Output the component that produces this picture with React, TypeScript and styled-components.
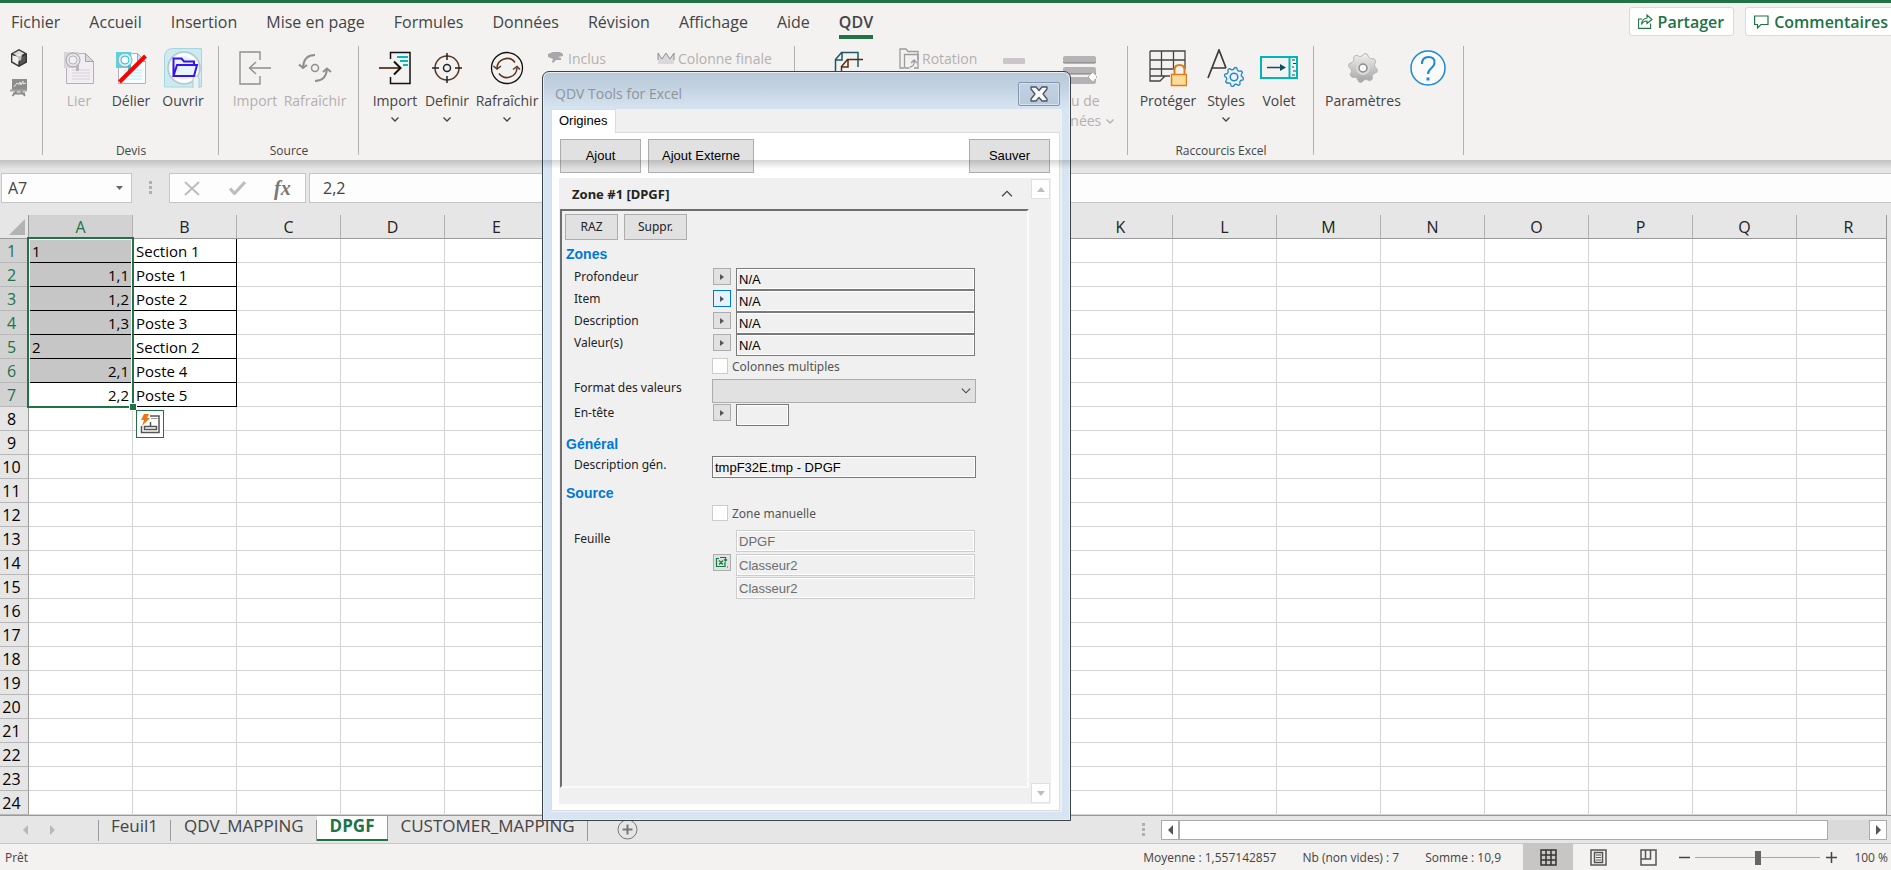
import React from "react";
import styled, { createGlobalStyle, css } from "styled-components";

const ui = `"Open Sans", "Noto Sans", sans-serif`;
const dlg = `"Noto Sans", "Open Sans", sans-serif`;
const arial = `"Liberation Sans", Arial, sans-serif`;
const green = "#217346";

const GlobalStyle = createGlobalStyle`
  *, *::before, *::after { box-sizing: border-box; }
  body { margin: 0; background: #e6e6e6; font-family: ${ui}; color: #444; overflow-x: hidden; }
  button, input, select { font: inherit; color: inherit; margin: 0; padding: 0; }
  button { cursor: default; white-space: nowrap; }
  svg { display: block; flex: none; }
`;

/* ---------- Application frame ---------- */
const Window = styled.div`
  position: relative;
  display: flex;
  flex-direction: column;
  overflow: hidden;
`;
const Ribbon = styled.header`
  position: relative;
  border-top: 3px solid ${green};
  background: #f3f2f1;
`;
const RibbonShadow = styled.div`
  position: absolute;
  z-index: 5;
  top: 100%;
  left: 0;
  right: 0;
  height: 9px;
  pointer-events: none;
  background: linear-gradient(rgba(0, 0, 0, 0.16), rgba(0, 0, 0, 0));
`;
const TopRow = styled.div`
  display: flex;
  justify-content: space-between;
  height: 36px;
  padding-top: 3px;
`;
const Tabs = styled.nav`
  display: flex;
  gap: 29px;
  padding-left: 11px;
`;
const Tab = styled.button<{ $active?: boolean }>`
  height: 33px;
  border: 0;
  border-bottom: 4px solid ${(p) => (p.$active ? green : "transparent")};
  background: none;
  font-size: 16px;
  line-height: 24px;
  padding-top: 2px;
  font-weight: ${(p) => (p.$active ? 600 : 400)};
`;
const TopActions = styled.div`
  display: flex;
  gap: 11px;
  padding-top: 1px;
`;
const ActionButton = styled.button<{ $edge?: boolean }>`
  display: flex;
  align-items: center;
  gap: 5px;
  height: 29px;
  padding: 0 ${(p) => (p.$edge ? 3 : 9)}px 0 8px;
  border: 1px solid #dcdad8;
  border-radius: 3px;
  background: #fff;
  color: ${green};
  font-size: 16px;
  font-weight: 600;
  ${(p) => p.$edge && css`border-right: 0; border-radius: 3px 0 0 3px;`}
`;
const ToolRow = styled.div`
  display: flex;
  height: 121px;
  padding-top: 7px;
`;
const Divider = styled.i`
  flex: none;
  width: 1px;
  height: 109px;
  background: #b3b0ad;
`;
const Group = styled.section`
  display: flex;
  flex: none;
  flex-direction: column;
  padding: 2px 9px 0 10px;
`;
const Tools = styled.div`
  display: flex;
  height: 94px;
`;
const GroupLabel = styled.div`
  font-size: 12px;
  line-height: 18px;
  text-align: center;
`;
const QuickColumn = styled.div`
  display: flex;
  flex: none;
  flex-direction: column;
  gap: 11px;
  width: 42px;
  padding: 3px 0 0 10px;
`;
const IconButton = styled.button`
  width: 18px;
  height: 18px;
  border: 0;
  background: none;
`;
const BigButton = styled.button<{ $w: number }>`
  display: flex;
  flex-direction: column;
  align-items: center;
  width: ${(p) => p.$w}px;
  border: 0;
  background: none;
  font-size: 14px;
  line-height: 20px;
  &:disabled { color: #b3b0ad; }
`;
const IconBox = styled.span`
  display: flex;
  align-items: center;
  justify-content: center;
  height: 40px;
  margin-bottom: 3px;
`;
const ChevronLine = styled.span`
  display: flex;
  align-items: center;
  justify-content: center;
  gap: 5px;
  min-height: 16px;
`;
const SmallColumn = styled.div<{ $w: number }>`
  width: ${(p) => p.$w}px;
  padding-left: 6px;
`;
const SmallButton = styled.button`
  display: flex;
  align-items: center;
  gap: 3px;
  height: 20px;
  border: 0;
  background: none;
  font-size: 14px;
  &:disabled { color: #b3b0ad; }
`;

/* ---------- Formula bar ---------- */
const FormulaBar = styled.div`
  display: flex;
  height: 55px;
  padding: 13px 0 0 1px;
  font-size: 16px;
`;
const BarBox = styled.div`
  display: flex;
  align-items: center;
  height: 30px;
  border: 1px solid #c6c6c6;
  background: #fdfdfd;
`;
const NameBox = styled(BarBox)`
  width: 131px;
  padding: 0 8px 0 6px;
`;
const BarInput = styled.input`
  flex: 1;
  min-width: 0;
  border: 0;
  background: none;
  outline: 0;
`;
const Grip = styled.i`
  width: 3px;
  height: 14px;
  margin: 8px 17px 0;
  background: repeating-linear-gradient(#b0b0b0 0 3px, transparent 3px 5px);
`;
const FxBox = styled(BarBox)`
  width: 137px;
  margin-right: 3px;
  justify-content: space-around;
`;
const FxButton = styled.button`
  border: 0;
  background: none;
  color: #777;
  font: italic bold 20px/24px "Liberation Serif", serif;
`;
const FormulaBox = styled(BarBox)`
  flex: 1;
  padding-left: 13px;
  border-right: 0;
`;

/* ---------- Sheet ---------- */
const SheetArea = styled.main`
  position: relative;
  height: 600px;
  margin-right: 4px;
  overflow: hidden;
  border-right: 1px solid #999;
  background: #fff;
`;
const Grid = styled.table`
  table-layout: fixed;
  width: 1901px;
  border-spacing: 0;
  font-size: 15px;
  line-height: 20px;
  color: #000;
  th, td { height: 24px; padding: 1px 3px 0; font-weight: 400; white-space: nowrap; }
`;
const Corner = styled.th`
  position: relative;
  width: 29px;
  background: #e6e6e6;
  border-right: 1px solid #999;
  border-bottom: 1px solid #999;
  &::after {
    content: "";
    position: absolute;
    right: 3px;
    bottom: 3px;
    border-left: 16px solid transparent;
    border-bottom: 16px solid #b3b3b3;
  }
`;
const ColHead = styled.th<{ $on?: boolean }>`
  width: 104px;
  font-size: 16px;
  text-align: center;
  border-right: 1px solid #b1b1b1;
  border-bottom: 1px solid #999;
  background: ${(p) => (p.$on ? "#d2d2d2" : "#e6e6e6")};
  color: ${(p) => (p.$on ? green : "#222")};
`;
const RowHead = styled.th<{ $on?: boolean }>`
  font-size: 16px;
  text-align: center;
  border-right: 1px solid #999;
  border-bottom: 1px solid #b8b8b8;
  background: ${(p) => (p.$on ? "#d2d2d2" : "#e6e6e6")};
  color: ${(p) => (p.$on ? green : "#000")};
  && { padding: 1px 5px 0 0; }
`;
const Cell = styled.td<{ $boxed?: boolean; $shaded?: boolean; $num?: boolean }>`
  border-right: 1px solid ${(p) => (p.$boxed ? "#000" : "#d4d4d4")};
  border-bottom: 1px solid ${(p) => (p.$boxed ? "#000" : "#d4d4d4")};
  background: ${(p) => (p.$shaded ? "#c6c6c6" : "#fff")};
  text-align: ${(p) => (p.$num ? "right" : "left")};
`;
const Selection = styled.div`
  position: absolute;
  top: 22px;
  left: 27px;
  width: 107px;
  height: 171px;
  border: 2px solid ${green};
  box-shadow: inset 0 0 0 1px #fff;
  pointer-events: none;
  &::after {
    content: "";
    position: absolute;
    right: -4px;
    bottom: -4px;
    width: 6px;
    height: 6px;
    background: ${green};
    outline: 1px solid #fff;
  }
`;
const QuickAnalysis = styled.button`
  position: absolute;
  top: 195px;
  left: 136px;
  display: grid;
  place-items: center;
  width: 28px;
  height: 28px;
  border: 1px solid ${green};
  background: #fff;
`;

/* ---------- Sheet tabs and status bar ---------- */
const SheetBar = styled.div`
  display: flex;
  height: 29px;
  border-top: 1px solid #999;
  border-bottom: 1px solid #c6c6c6;
`;
const TabArrows = styled.div`
  display: flex;
  align-items: center;
  gap: 22px;
  width: 98px;
  padding-left: 23px;
`;
const SheetTab = styled.button<{ $active?: boolean; $first?: boolean }>`
  position: relative;
  height: 25px;
  padding: 0 13px 6px;
  border: 0;
  background: none;
  font-size: 17px;
  line-height: 19px;
  &::after, &::before {
    content: "";
    position: absolute;
    top: 4px;
    right: 0;
    width: 1px;
    height: 21px;
    background: #999;
  }
  &::before { right: auto; left: 0; display: ${(p) => (p.$first ? "block" : "none")}; }
  ${(p) =>
    p.$active &&
    css`
      background: #fff;
      color: ${green};
      font-weight: 700;
      padding-bottom: 4px;
      border-bottom: 2px solid ${green};
      &::after { top: 0; height: 23px; }
    `}
`;
const AddSheet = styled.button`
  display: grid;
  place-items: center;
  width: 24px;
  margin-left: 28px;
  border: 0;
  background: none;
`;
const SheetScroll = styled.div`
  display: flex;
  width: 726px;
  height: 20px;
  margin: 4px 4px 0 0;
  background: #dadada;
`;
const BarGrip = styled(Grip)`
  margin: 7px 16px 0 auto;
`;
const ScrollStep = styled.button`
  display: grid;
  place-items: center;
  width: 18px;
  border: 1px solid #ababab;
  background: #fff;
`;
const ScrollThumb = styled.div`
  flex: 1;
  margin-right: 41px;
  border: 1px solid #ababab;
  background: #fff;
`;
const StatusBar = styled.footer`
  display: flex;
  align-items: center;
  height: 27px;
  padding: 0 3px 0 5px;
  background: #f3f2f1;
  font-size: 12px;
  white-space: nowrap;
`;
const Stats = styled.div`
  display: flex;
  gap: 26px;
  margin: 0 22px 0 auto;
`;
const ViewButton = styled.button<{ $on?: boolean }>`
  display: grid;
  place-items: center;
  width: 50px;
  height: 27px;
  border: 0;
  background: ${(p) => (p.$on ? "#c8c6c4" : "none")};
`;
const ZoomButton = styled.button`
  display: grid;
  place-items: center;
  width: 12px;
  height: 20px;
  margin: 0 5px;
  border: 0;
  background: none;
`;
const ZoomRange = styled.input`
  appearance: none;
  width: 125px;
  height: 14px;
  background: linear-gradient(#a6a6a6, #a6a6a6) center / 100% 1px no-repeat;
  &::-webkit-slider-thumb {
    appearance: none;
    width: 6px;
    height: 14px;
    background: #666;
  }
`;
const ZoomValue = styled.span`
  margin-left: 9px;
  width: 37px;
  text-align: right;
`;

/* ---------- Dialog ---------- */
const Dialog = styled.section`
  position: absolute;
  z-index: 3;
  top: 71px;
  left: 542px;
  width: 529px;
  height: 750px;
  display: flex;
  flex-direction: column;
  padding: 0 8px 8px;
  border: 1px solid #3c4248;
  border-radius: 7px 7px 0 0;
  background: linear-gradient(#b9c8d6, #c5d4e3 18px, #d7e4f2 37px);
  box-shadow: inset 0 0 0 1px #e6eef7;
`;
const TitleBar = styled.div`
  display: flex;
  justify-content: space-between;
  height: 37px;
  padding: 10px 2px 0 4px;
  font-size: 14px;
  line-height: 24px;
  color: #8e9499;
`;
const CloseButton = styled.button`
  display: grid;
  place-items: center;
  width: 42px;
  height: 24px;
  border: 1px solid #8296b0;
  border-radius: 2px;
  background: linear-gradient(#c3d2e2, #b9cadc);
  box-shadow: inset 0 0 0 1px #d5e1ee;
`;
const Client = styled.div`
  display: flex;
  flex: 1;
  flex-direction: column;
  padding: 0 2px 1px 0;
  background: #f0f0f0;
`;
const DialogTab = styled.button`
  align-self: flex-start;
  position: relative;
  z-index: 1;
  height: 24px;
  margin-bottom: -1px;
  padding: 0 8px 1px 7px;
  border: 1px solid #dcdcdc;
  border-bottom: 0;
  background: #fff;
  color: #000;
  font: 13px/20px ${arial};
`;
const Page = styled.div`
  display: flex;
  flex: 1;
  flex-direction: column;
  gap: 5px;
  padding: 6px 8px 6px 7px;
  border: 1px solid #dcdcdc;
  background: #fff;
`;
const PageActions = styled.div`
  display: flex;
  gap: 7px;
  padding: 0 1px;
`;
const Spacer = styled.span`
  flex: 1;
`;
const PushButton = styled.button<{ $w: number; $small?: boolean }>`
  width: ${(p) => p.$w}px;
  height: ${(p) => (p.$small ? 26 : 34)}px;
  border: 1px solid #adadad;
  background: #e1e1e1;
  color: ${(p) => (p.$small ? "#222" : "#000")};
  font: ${(p) => (p.$small ? `12px/18px ${dlg}` : `13px/20px ${arial}`)};
`;
const Panel = styled.div`
  display: flex;
  flex: 1;
  background: #f0f0f0;
`;
const PanelMain = styled.div`
  display: flex;
  flex: 1;
  flex-direction: column;
  padding: 0 2px 16px 1px;
`;
const ZoneHeader = styled.button`
  display: flex;
  align-items: center;
  justify-content: space-between;
  height: 31px;
  padding: 0 16px 0 12px;
  border: 0;
  background: none;
  color: #222;
  font: bold 13px/20px ${dlg};
`;
const Sunken = styled.div`
  flex: 1;
  padding: 3px;
  border: 2px solid;
  border-color: #6e6e6e #fafafa #fafafa #6e6e6e;
  font: 12px/17px ${dlg};
  color: #222;
`;
const PanelScroll = styled.div`
  display: flex;
  flex-direction: column;
  justify-content: space-between;
  padding: 1px 1px 1px 0;
`;
const PanelStep = styled.button`
  display: grid;
  place-items: center;
  width: 19px;
  height: 20px;
  border: 1px solid #e0e0e0;
  background: #fff;
`;
const ZoneActions = styled.div`
  display: flex;
  gap: 6px;
`;
const Heading = styled.h3<{ $top: number }>`
  margin: ${(p) => p.$top}px 0 0;
  padding-left: 1px;
  color: #0078d7;
  font: bold 14px/20px ${arial};
`;
const FormRow = styled.div<{ $top?: number; $wide?: boolean }>`
  display: grid;
  grid-template-columns: ${(p) => (p.$wide ? "147px 264px" : "148px 23px 239px")};
  align-items: start;
  margin-top: ${(p) => p.$top || 0}px;
  & > label, & > span { padding-left: 9px; }
`;
const Pick = styled.button<{ $hot?: boolean }>`
  display: grid;
  place-items: center;
  width: 18px;
  height: 17px;
  border: 1px solid ${(p) => (p.$hot ? "#0078d7" : "#adadad")};
  background: ${(p) => (p.$hot ? "#e5f1fb" : "#e1e1e1")};
`;
const Field = styled.input<{ $w?: number }>`
  grid-column: -2;
  width: ${(p) => (p.$w ? `${p.$w}px` : "100%")};
  height: 22px;
  padding: 0 2px;
  border: 1px solid #7a7a7a;
  background: #f0f0f0;
  box-shadow: inset 0 0 0 1px #fff;
  color: #000;
  font: 13px/18px ${arial};
  &:disabled { border-color: #ccc; color: #6d6d6d; }
`;
const SelectWrap = styled.div`
  position: relative;
  & > svg { position: absolute; right: 5px; top: 9px; pointer-events: none; }
`;
const Select = styled.select`
  appearance: none;
  display: block;
  width: 100%;
  height: 24px;
  border: 1px solid #adadad;
  background: #e1e1e1;
`;
const CheckRow = styled.label`
  display: flex;
  align-items: center;
  gap: 4px;
  height: 20px;
  padding-left: 147px;
  color: #555;
`;
const Check = styled.input`
  appearance: none;
  width: 16px;
  height: 16px;
  border: 1px solid #ccc;
  background: #fff;
`;

/* ---------- Icons ---------- */
const Chevron = ({ color = "#444", up = false, s = 8 }: { color?: string; up?: boolean; s?: number }) => (
  <svg width={s} height={s / 2 + 1} viewBox="0 0 8 5" fill="none" stroke={color} strokeWidth={s > 8 ? 0.9 : 1.3}>
    <path d={up ? "M.5 4.5 4 1l3.5 3.5" : "M.5.5 4 4 7.5.5"} />
  </svg>
);
const Triangle = ({ d, w, h, color }: { d: string; w: number; h: number; color: string }) => (
  <svg width={w} height={h} viewBox={`0 0 ${w} ${h}`}><path d={d} fill={color} /></svg>
);
const CubeIcon = () => (
  <svg width="18" height="18" viewBox="0 0 18 18">
    <path d="M9 0 17 4.500V13.500L9 18 1 13.500V4.500z" fill="#333" />
    <path d="M9 1.500 14.500 4.600 9 7.500 3 4.800z" fill="#d8d8d8" />
    <path d="M2.300 6 8.400 8.800V16L2.300 12.600z" fill="#eee" />
    <path d="M9.800 9 15.600 6v6.500l-5.800 3.700z" fill="#555" />
    <path d="M4 7.500 9 4.500l3 1.500-1 5-4 2z" fill="#f5f5f5" opacity=".7" />
  </svg>
);
const BoardIcon = () => (
  <svg width="18" height="19" viewBox="0 0 18 19" fill="none">
    <path d="M2 1h15v11H2z" fill="#8d8d8d" />
    <path d="M4 9l3-4 2 1.500L10 4l1 3 2-4v3l3-1" stroke="#e8e8e8" />
    <path d="M0 12.500h17" stroke="#a5a5a5" strokeWidth="2" />
    <path d="M6.500 13l-4 5M11 13l4 5M3 15.500h12" stroke="#8d8d8d" strokeWidth="2" />
  </svg>
);
const SheetIcon = ({ off = false }: { off?: boolean }) => {
  const c = off ? "#b9b6ba" : "#2cc3d2";
  const page = off ? "#f1edf2" : "#f7fdfe";
  return (
    <svg width="33" height="34" viewBox="0 0 33 34" fill="none">
      <path d="M3.500 2.500h19l8 8v22h-27z" fill={page} stroke="#b4b2b6" />
      <path d="M22.500 2.500v8h8z" fill={off ? "#dcd9de" : "#b3eef3"} stroke="#a7a5a9" />
      <path d="M9 19h18M9 22h18M9 25h18M9 28h18" stroke={off ? "#d4d0d6" : "#bcecf1"} />
      <path d="M1 1h15v16H1z" fill={off ? "#d9d6da" : "#59d5e0"} />
      <circle cx="10" cy="9" r="7" fill={off ? "#e6e3e7" : "#c4f2f6"} stroke="#9fa3a6" />
      <circle cx="10" cy="9" r="4" fill={page} stroke={c} />
      <path d="M13 14h3v6h-3z" fill={c} />
      {!off && <path d="M4.500 31 30.500 5" stroke="#f00" strokeWidth="4" />}
    </svg>
  );
};
const FolderIcon = () => (
  <svg width="38" height="40" viewBox="0 0 38 40" fill="none">
    <path d="M.5 39V9Q.5.500 9 .5h28.500V39z" fill="#cdeaf0" stroke="#a3d7e0" />
    <circle cx="20" cy="20" r="16" fill="#e6f5f8" stroke="#b7c6cc" strokeWidth="1.500" />
    <circle cx="20" cy="20" r="13" stroke="#fff" strokeWidth="2" />
    <path d="M29 40V31q0-3 3-3t3 3v9" fill="#e6f5f8" stroke="#b7c6cc" />
    <path d="M9.500 28V10.500h8l2.500 3h10V17M9.500 28 13 17h20l-3 11z" stroke="#3a12f0" strokeWidth="2" />
  </svg>
);
const ExportIcon = () => (
  <svg width="34" height="34" viewBox="0 0 34 34" fill="none" stroke="#8f8f8f" strokeWidth="1.400">
    <path d="M22 9V1H2v32h20v-8M33 17H11M18 11l-6.500 6 6.500 6" />
  </svg>
);
const SyncOffIcon = () => (
  <svg width="34" height="32" viewBox="0 0 34 32" fill="none" stroke="#8f8f8f" strokeWidth="2">
    <circle cx="17" cy="16" r="3.500" strokeWidth="1.500" />
    <path d="M17 3Q6 3 5 15M17 29Q28 29 29 17" /><path d="M1 12.500l4 3.500 4-3M25 20l4-3.500 4 3.500" />
  </svg>
);
const ImportIcon = () => (
  <svg width="34" height="34" viewBox="0 0 34 34" fill="none" stroke="#111" strokeWidth="1.500">
    <path d="M12.500 8V1.500H32v31H12.500V26" />
    <path d="M1 17h21" stroke="#5a3522" strokeWidth="1.800" /><path d="M16 10.500l6.500 6.500-6.500 6.500" strokeWidth="2" />
    <path d="M19 6h11M22 10h8M25 14h5" stroke="#00bcc0" strokeWidth="2" />
  </svg>
);
const TargetIcon = () => (
  <svg width="32" height="32" viewBox="0 0 32 32" fill="none" stroke="#5a3522" strokeWidth="1.500">
    <circle cx="16" cy="16" r="12" /><circle cx="16" cy="16" r="3.500" stroke="#222" />
    <path d="M16 1v7M16 24v7M1 16h7M24 16h7" stroke="#222" />
  </svg>
);
const RefreshIcon = () => (
  <svg width="34" height="34" viewBox="0 0 34 34" fill="none">
    <circle cx="17" cy="17" r="15.500" stroke="#111" strokeWidth="1.300" />
    <g stroke="#5a3522" strokeWidth="1.500">
      <path d="M25 11.500A10 10 0 0 0 7 17M9 22.500A10 10 0 0 0 27 17" />
      <path d="M3.500 15l3.500 3 4-3M23 18.500l4-3 3 3" />
    </g>
  </svg>
);
const CapIcon = () => (
  <svg width="18" height="14" viewBox="0 0 18 14" fill="#a9a7a9">
    <path d="M1 3 6 1h7l3 2v2l-5 1 3 1v2H9l-3 3-1-1 1-3-5-2z" />
  </svg>
);
const CrownIcon = () => (
  <svg width="18" height="14" viewBox="0 0 18 14">
    <path d="M1 13V2l4 6 4-6 4 6 4-6v11z" fill="#dcd7dd" />
    <path d="M1 9V2l4 6 4-6 4 6 4-6v7" fill="none" stroke="#8f8d90" />
  </svg>
);
const CopyIcon = () => (
  <svg width="30" height="34" viewBox="0 0 30 34" fill="none">
    <path d="M1.500 25V8.500l6-7H24V16M8 2v7H2" stroke="#1f5866" strokeWidth="1.500" />
    <path d="M7.500 33V15.500l6-7H29M14 8.500V16H8" stroke="#5a2d12" strokeWidth="1.500" />
  </svg>
);
const RotateIcon = () => (
  <svg width="20" height="21" viewBox="0 0 20 21" fill="none" stroke="#9b9b9b" strokeWidth="1.300">
    <path d="M5 20H1V1h6l2 2.500h10V12" /><path d="M5.500 20V6.500H19V20H15M5.500 20h5" />
    <path d="M11 19q5-1 4-6M12 15l3-3 3 3" />
  </svg>
);
const MinusBar = () => (
  <svg width="22" height="20" viewBox="0 0 22 20"><rect y="10" width="22" height="6" rx="1" fill="#cac6cc" /></svg>
);
const StackIcon = () => (
  <svg width="34" height="32" viewBox="0 0 34 32">
    <g fill="#b5b3b6"><rect y="4" width="33" height="8" rx="2" /><rect y="15" width="33" height="8" rx="2" /><rect y="25" width="33" height="7" rx="2" /></g>
    <path d="M0 10.500h33M0 21.500h33" stroke="#969498" /><path d="M25 25l5-5 4 5-4 5z" fill="#fff" stroke="#888" strokeDasharray="1 1" />
  </svg>
);
const ProtectIcon = () => (
  <svg width="38" height="38" viewBox="0 0 38 38" fill="none">
    <path d="M1 2h35v18M1 2v30h10l5-5h5M1 11h35M1 20h25M12.500 2v25M24.500 2v17M1 27h20" stroke="#444" strokeWidth="1.300" />
    <path d="M25.500 25v-4q0-5 5-5t5 5v4" stroke="#e07b17" strokeWidth="2" />
    <path d="M22.500 25.500h15v11h-15z" fill="#fbdc98" stroke="#e07b17" strokeWidth="1.500" />
  </svg>
);
const gearPath = (cx: number, cy: number, r: number, q: number) =>
  Array.from({ length: 32 }, (_, i) => {
    const a = ((i + 0.5) / 32) * Math.PI * 2;
    const k = i % 4 < 2 ? r : q;
    return `${i ? "L" : "M"}${(cx + Math.cos(a) * k).toFixed(1)} ${(cy + Math.sin(a) * k).toFixed(1)}`;
  }).join("") + "z";
const StylesIcon = () => (
  <svg width="38" height="38" viewBox="0 0 38 38" fill="none">
    <path d="M1 29 12 1l7 18M5 19h14" stroke="#3b3a39" strokeWidth="1.700" />
    <path d={gearPath(27, 28, 9.5, 7.5)} fill="#f3f2f1" stroke="#1e88d2" strokeWidth="1.300" strokeLinejoin="round" />
    <circle cx="27" cy="28" r="3.800" stroke="#1e88d2" strokeWidth="1.500" />
  </svg>
);
const PaneIcon = () => (
  <svg width="38" height="24" viewBox="0 0 38 24" fill="none">
    <path d="M1 1h36v21H1zM29.500 1v21" stroke="#00b5b8" strokeWidth="2" />
    <path d="M7 11.500h16" stroke="#0d4f5e" strokeWidth="1.500" /><path d="M20 8l6 3.500-6 3.500z" fill="#0d4f5e" />
    <path d="M32 4h3M33 7.500h3M32 11h2M33 15h3M32 19h3" stroke="#0d4f5e" />
  </svg>
);
const SettingsIcon = () => (
  <svg width="32" height="34" viewBox="0 0 32 34" fill="none">
    <defs><linearGradient id="metal" x2="0" y2="1"><stop stopColor="#f0f0f0" /><stop offset="1" stopColor="#a3a3a3" /></linearGradient></defs>
    <path d={gearPath(16, 17, 14.5, 12)} fill="url(#metal)" stroke="#b4b4b4" strokeLinejoin="round" />
    <circle cx="16" cy="17" r="7" fill="#d9d9d9" /><circle cx="16" cy="17" r="4" fill="#f7f7f7" stroke="#8a8a8a" strokeWidth="1.500" />
  </svg>
);
const HelpIcon = () => (
  <svg width="38" height="38" viewBox="0 0 38 38" fill="none" stroke="#1e88d2">
    <circle cx="19" cy="19" r="17" fill="#fafafa" strokeWidth="1.500" />
    <path d="M13 15q0-7 6.500-7t6 6c0 5-6.500 5-6.500 11" strokeWidth="2" /><path d="M17.500 30h3" strokeWidth="3" />
  </svg>
);
const ShareIcon = () => (
  <svg width="15" height="15" viewBox="0 0 15 15" fill="none" stroke={green} strokeWidth="1.100">
    <path d="M4 5H.6v9.400h12V9.500" /><path d="M3.500 10.500Q4 4.500 9 4V1l5 4.500-5 4V7Q5 7 3.500 10.500z" />
  </svg>
);
const CommentIcon = () => (
  <svg width="15" height="15" viewBox="0 0 15 15" fill="none" stroke={green} strokeWidth="1.200">
    <path d="M.6 2h13.400v8.500H7L3.500 14v-3.500H.6z" />
  </svg>
);

/* ---------- Data ---------- */
const tabs = ["Fichier", "Accueil", "Insertion", "Mise en page", "Formules", "Données", "Révision", "Affichage", "Aide", "QDV"];
const columns = "ABCDEFGHIJKLMNOPQR".split("");
const rows = [["1", "Section 1"], ["1,1", "Poste 1"], ["1,2", "Poste 2"], ["1,3", "Poste 3"], ["2", "Section 2"], ["2,1", "Poste 4"], ["2,2", "Poste 5"]];
const sheets = ["Feuil1", "QDV_MAPPING", "DPGF", "CUSTOMER_MAPPING"];
const zones = [["profondeur", "Profondeur"], ["item", "Item"], ["description", "Description"], ["valeurs", "Valeur(s)"]];

type BigProps = { w: number; icon: React.ReactNode; label?: string; name?: string; menu?: boolean; off?: boolean };
const Big = ({ w, icon, label, name, menu, off }: BigProps) => (
  <BigButton $w={w} disabled={off} aria-label={name}>
    <IconBox>{icon}</IconBox>
    {label}
    {menu && <ChevronLine><Chevron /></ChevronLine>}
  </BigButton>
);

const RibbonTools = () => (
  <ToolRow>
    <QuickColumn>
      <IconButton aria-label="QDV"><CubeIcon /></IconButton>
      <IconButton aria-label="Tableau"><BoardIcon /></IconButton>
    </QuickColumn>
    <Divider />
    <Group>
      <Tools>
        <Big w={52} icon={<SheetIcon off />} label="Lier" off />
        <Big w={52} icon={<SheetIcon />} label="Délier" />
        <Big w={52} icon={<FolderIcon />} label="Ouvrir" />
      </Tools>
      <GroupLabel>Devis</GroupLabel>
    </Group>
    <Divider />
    <Group>
      <Tools>
        <Big w={52} icon={<ExportIcon />} label="Import" off />
        <Big w={68} icon={<SyncOffIcon />} label="Rafraîchir" off />
      </Tools>
      <GroupLabel>Source</GroupLabel>
    </Group>
    <Divider />
    <Group>
      <Tools>
        <Big w={52} icon={<ImportIcon />} label="Import" menu />
        <Big w={52} icon={<TargetIcon />} label="Definir" menu />
        <Big w={68} icon={<RefreshIcon />} label="Rafraîchir" menu />
        <SmallColumn $w={110}><SmallButton disabled><CapIcon />Inclus</SmallButton></SmallColumn>
        <SmallColumn $w={134}><SmallButton disabled><CrownIcon />Colonne finale</SmallButton></SmallColumn>
      </Tools>
    </Group>
    <Divider />
    <Group>
      <Tools>
        <Big w={88} icon={<CopyIcon />} name="Copier" />
        <SmallColumn $w={104}><SmallButton disabled><RotateIcon />Rotation</SmallButton></SmallColumn>
        <SmallColumn $w={44}><SmallButton disabled aria-label="Réduire"><MinusBar /></SmallButton></SmallColumn>
        <BigButton $w={77} disabled>
          <IconBox><StackIcon /></IconBox>
          Jeu de
          <ChevronLine>données <Chevron color="#b3b0ad" /></ChevronLine>
        </BigButton>
      </Tools>
    </Group>
    <Divider />
    <Group>
      <Tools>
        <Big w={60} icon={<ProtectIcon />} label="Protéger" />
        <Big w={56} icon={<StylesIcon />} label="Styles" menu />
        <Big w={50} icon={<PaneIcon />} label="Volet" />
      </Tools>
      <GroupLabel>Raccourcis Excel</GroupLabel>
    </Group>
    <Divider />
    <Group>
      <Tools>
        <Big w={78} icon={<SettingsIcon />} label="Paramètres" />
        <Big w={52} icon={<HelpIcon />} name="Aide" />
      </Tools>
    </Group>
    <Divider />
  </ToolRow>
);

const Sheet = () => (
  <SheetArea>
    <Grid>
      <thead>
        <tr>
          <Corner aria-label="Tout sélectionner" />
          {columns.map((c, i) => <ColHead key={c} $on={i === 0}>{c}</ColHead>)}
        </tr>
      </thead>
      <tbody>
        {Array.from({ length: 24 }, (_, r) => (
          <tr key={r}>
            <RowHead $on={r < 7}>{r + 1}</RowHead>
            {columns.map((c, i) => {
              const value = rows[r]?.[i];
              return (
                <Cell key={c} $boxed={value !== undefined} $shaded={i === 0 && r < 6} $num={i === 0 && !!value?.includes(",")}>
                  {value}
                </Cell>
              );
            })}
          </tr>
        ))}
      </tbody>
    </Grid>
    <Selection />
    <QuickAnalysis aria-label="Analyse rapide">
      <svg width="20" height="20" viewBox="0 0 20 20" fill="none">
        <path d="M10 2h9v16.500H1.500V12" stroke="#555" strokeWidth="1.500" />
        <path d="M11 4.500h6.500" stroke="#999" />
        <path d="M4.500 15.500V12.500h12v3zM10.500 12V8" stroke="#555" strokeWidth="1.500" />
        <path d="M4 0h5L7 4h3L2 12l2-6H1z" fill="#e8781a" />
      </svg>
    </QuickAnalysis>
  </SheetArea>
);

const ToolsDialog = () => (
  <Dialog role="dialog" aria-label="QDV Tools for Excel">
    <TitleBar>
      QDV Tools for Excel
      <CloseButton aria-label="Fermer">
        <svg width="18" height="16" viewBox="0 0 18 16">
          <path d="M1 1h5l3 3.500L12 1h5v2l-4 5 4 5v2h-5l-3-3.500L6 15H1v-2l4-5-4-5z" fill="#fafafa" stroke="#4a5364" strokeWidth="1.300" strokeLinejoin="round" />
        </svg>
      </CloseButton>
    </TitleBar>
    <Client>
      <DialogTab>Origines</DialogTab>
      <Page>
        <PageActions>
          <PushButton $w={81}>Ajout</PushButton>
          <PushButton $w={106}>Ajout Externe</PushButton>
          <Spacer />
          <PushButton $w={81}>Sauver</PushButton>
        </PageActions>
        <Panel>
          <PanelMain>
            <ZoneHeader>Zone #1 [DPGF]<Chevron up s={12} /></ZoneHeader>
            <Sunken>
              <ZoneActions>
                <PushButton $w={53} $small>RAZ</PushButton>
                <PushButton $w={63} $small>Suppr.</PushButton>
              </ZoneActions>
              <Heading $top={4}>Zones</Heading>
              {zones.map(([id, label], i) => (
                <FormRow key={id} $top={i ? 0 : 4}>
                  <label htmlFor={id}>{label}</label>
                  <Pick $hot={i === 1} aria-label={`Choisir ${label}`}><Triangle w={4} h={6} d="M0 0 4 3 0 6z" color="#555" /></Pick>
                  <Field id={id} defaultValue="N/A" readOnly />
                </FormRow>
              ))}
              <CheckRow><Check type="checkbox" disabled />Colonnes multiples</CheckRow>
              <FormRow $top={3} $wide>
                <label htmlFor="format">Format des valeurs</label>
                <SelectWrap><Select id="format" /><Chevron s={10} /></SelectWrap>
              </FormRow>
              <FormRow $top={1}>
                <label htmlFor="entete">En-tête</label>
                <Pick aria-label="Choisir En-tête"><Triangle w={4} h={6} d="M0 0 4 3 0 6z" color="#555" /></Pick>
                <Field id="entete" $w={53} readOnly />
              </FormRow>
              <Heading $top={8}>Général</Heading>
              <FormRow $top={2} $wide>
                <label htmlFor="descgen">Description gén.</label>
                <Field id="descgen" defaultValue="tmpF32E.tmp - DPGF" readOnly />
              </FormRow>
              <Heading $top={5}>Source</Heading>
              <CheckRow><Check type="checkbox" disabled />Zone manuelle</CheckRow>
              <FormRow $top={7}>
                <label htmlFor="feuille">Feuille</label>
                <Field id="feuille" defaultValue="DPGF" disabled />
              </FormRow>
              <FormRow $top={2}>
                <span />
                <Pick aria-label="Actualiser le classeur">
                  <svg width="14" height="13" viewBox="0 0 14 13" fill="none" stroke="#107c41" strokeWidth="1.200">
                    <path d="M4 2.500H1.500v8h8.500V6M4 4.500l4 4M8 4.500l-4 4M5 1.500h5.500V4M9 3.500l1.500 1.500L12 3.500M12 11h1" />
                  </svg>
                </Pick>
                <Field aria-label="Classeur" defaultValue="Classeur2" disabled />
              </FormRow>
              <FormRow $top={1}>
                <span />
                <Field aria-label="Classeur source" defaultValue="Classeur2" disabled />
              </FormRow>
            </Sunken>
          </PanelMain>
          <PanelScroll>
            <PanelStep aria-label="Monter"><Triangle w={8} h={5} d="M0 5 4 0l4 5z" color="#bfbfbf" /></PanelStep>
            <PanelStep aria-label="Descendre"><Triangle w={8} h={5} d="M0 0h8L4 5z" color="#bfbfbf" /></PanelStep>
          </PanelScroll>
        </Panel>
      </Page>
    </Client>
  </Dialog>
);

export default function App() {
  return (
    <>
      <GlobalStyle />
      <Window>
        <Ribbon>
          <TopRow>
            <Tabs>{tabs.map((t) => <Tab key={t} $active={t === "QDV"}>{t}</Tab>)}</Tabs>
            <TopActions>
              <ActionButton><ShareIcon />Partager</ActionButton>
              <ActionButton $edge><CommentIcon />Commentaires</ActionButton>
            </TopActions>
          </TopRow>
          <RibbonTools />
          <RibbonShadow />
        </Ribbon>
        <FormulaBar>
          <NameBox>
            <BarInput aria-label="Zone Nom" defaultValue="A7" />
            <Triangle w={7} h={4} d="M0 0h7L3.500 4z" color="#666" />
          </NameBox>
          <Grip />
          <FxBox>
            <FxButton aria-label="Annuler">
              <svg width="16" height="15" viewBox="0 0 16 15" stroke="#bdbdbd" strokeWidth="2" fill="none"><path d="M1 1l14 13M15 1 1 14" /></svg>
            </FxButton>
            <FxButton aria-label="Entrer">
              <svg width="17" height="14" viewBox="0 0 17 14" stroke="#bdbdbd" strokeWidth="3" fill="none"><path d="M1 7.500l4.500 5L16 1" /></svg>
            </FxButton>
            <FxButton>fx</FxButton>
          </FxBox>
          <FormulaBox><BarInput aria-label="Barre de formule" defaultValue="2,2" /></FormulaBox>
        </FormulaBar>
        <Sheet />
        <SheetBar>
          <TabArrows>
            <Triangle w={5} h={10} d="M5 0v10L0 5z" color="#b8b8b8" />
            <Triangle w={5} h={10} d="M0 0v10l5-5z" color="#b8b8b8" />
          </TabArrows>
          {sheets.map((s, i) => <SheetTab key={s} $active={s === "DPGF"} $first={i === 0}>{s}</SheetTab>)}
          <AddSheet aria-label="Nouvelle feuille">
            <svg width="21" height="21" viewBox="0 0 21 21" fill="none" stroke="#777"><circle cx="10.500" cy="10.500" r="9.500" /><path d="M10.500 5.500v10M5.500 10.500h10" strokeWidth="2" /></svg>
          </AddSheet>
          <BarGrip />
          <SheetScroll>
            <ScrollStep aria-label="Défiler à gauche"><Triangle w={5} h={10} d="M5 0v10L0 5z" color="#555" /></ScrollStep>
            <ScrollThumb />
            <ScrollStep aria-label="Défiler à droite"><Triangle w={5} h={10} d="M0 0v10l5-5z" color="#555" /></ScrollStep>
          </SheetScroll>
        </SheetBar>
        <StatusBar>
          Prêt
          <Stats><span>Moyenne : 1,557142857</span><span>Nb (non vides) : 7</span><span>Somme : 10,9</span></Stats>
          <ViewButton $on aria-label="Normal">
            <svg width="17" height="17" viewBox="0 0 17 17" fill="none" stroke="#333" strokeWidth="1.500"><path d="M1 1h15v15H1zM6 1v15M11 1v15M1 6h15M1 11h15" /></svg>
          </ViewButton>
          <ViewButton aria-label="Mise en page">
            <svg width="17" height="17" viewBox="0 0 17 17" fill="none" stroke="#555" strokeWidth="1.500"><path d="M1 1h15v15H1z" /><path d="M4.500 3.500h8v10h-8z" /><path d="M6 6h5M6 8.500h5M6 11h5" strokeWidth="1" /></svg>
          </ViewButton>
          <ViewButton aria-label="Aperçu des sauts de page">
            <svg width="17" height="17" viewBox="0 0 17 17" fill="none" stroke="#555" strokeWidth="1.500"><path d="M1 1h15v15H1zM1 10h9.500V1M5.500 1v9" /></svg>
          </ViewButton>
          <ZoomButton aria-label="Zoom arrière"><svg width="11" height="11" viewBox="0 0 11 11" stroke="#444" strokeWidth="1.500"><path d="M0 5.500h11" /></svg></ZoomButton>
          <ZoomRange type="range" aria-label="Zoom" defaultValue={50} />
          <ZoomButton aria-label="Zoom avant"><svg width="11" height="11" viewBox="0 0 11 11" stroke="#444" strokeWidth="1.500"><path d="M0 5.500h11M5.500 0v11" /></svg></ZoomButton>
          <ZoomValue>100 %</ZoomValue>
        </StatusBar>
        <ToolsDialog />
      </Window>
    </>
  );
}
